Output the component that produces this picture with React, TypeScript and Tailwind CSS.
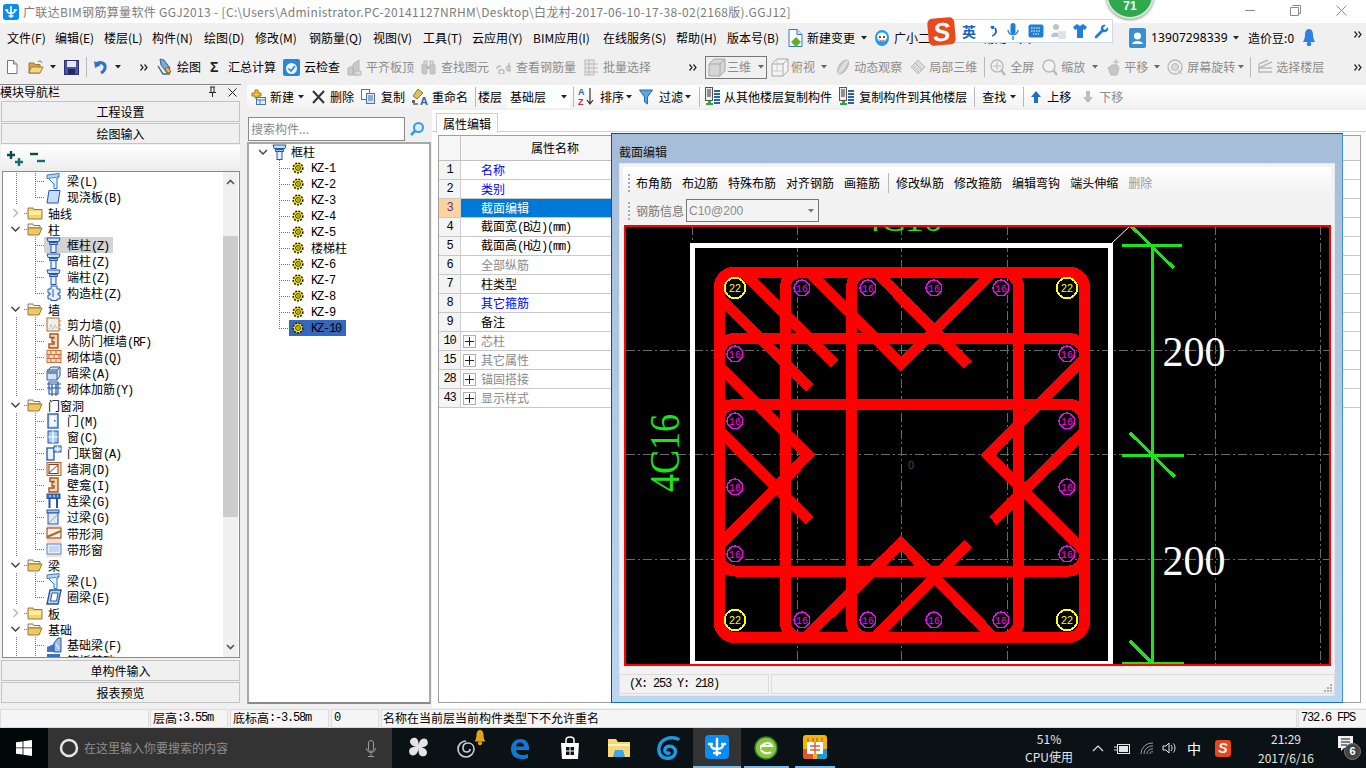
import React from "react";

const CJK = '"Noto Sans CJK SC","Noto Sans",sans-serif';

function Mixed({ t }: { t: string }) {
  const parts = t.split(/([\x00-\x7f]+)/).filter(Boolean);
  return (
    <>
      {parts.map((p, i) =>
        /^[\x00-\x7f]+$/.test(p) ? (
          <span key={i} className="font-['Liberation_Mono',monospace] text-[12px] tracking-[-1.2px]">{p}</span>
        ) : (
          <span key={i}>{p}</span>
        )
      )}
    </>
  );
}

type SP = { className?: string; children: React.ReactNode; w?: number; h?: number; vb?: string };
const Sv = ({ className = "", children, w = 16, h = 16, vb }: SP) => (
  <svg width={w} height={h} viewBox={vb || `0 0 ${w} ${h}`} className={`shrink-0 block ${className}`}>{children}</svg>
);

const Caret = ({ className = "", c = "#222" }: { className?: string; c?: string }) => (
  <Sv w={6} h={4} className={className}><path d="M0 0h6L3 3.5z" fill={c} /></Sv>
);
const More = ({ className = "" }: { className?: string }) => (
  <Sv w={8} h={7} className={className}><path d="M0.5 0.5L3 3.5 0.5 6.5M4.5 0.5L7 3.5 4.5 6.5" fill="none" stroke="#222" strokeWidth="1.2" /></Sv>
);
const Sep = ({ className = "" }: { className?: string }) => <div className={`w-px h-[20px] bg-[#b8b8b8] shrink-0 ${className}`} />;

const AppLogo = ({ s = 16 }: { s?: number }) => (
  <Sv w={s} h={s} vb="0 0 24 24">
    <rect width="24" height="24" rx="4" fill="#0a8df0" />
    <path d="M12 4v16M6 9c0 4 2 5 6 5s6-1 6-5M9 18h6M4 9h3M17 9h3" fill="none" stroke="#fff" strokeWidth="2.4" strokeLinecap="round" />
  </Sv>
);

const Gray = "#b9b9b9";
const IcNew = () => <Sv w={14} h={16}><path d="M2.5 1.5h6l3.5 3.5v9.5h-9.5z" fill="#fff" stroke="#777" /><path d="M8.5 1.5v3.5h3.5" fill="#ddd" stroke="#777" /></Sv>;
const IcOpen = () => <Sv w={16} h={16}><path d="M1 4h5l1 1.5h5V14H1z" fill="#d9a441" stroke="#9a7a35" /><path d="M3 8h12l-3 6H1z" fill="#f4d68a" stroke="#9a7a35" /><path d="M10 3c2-2 3-1 4 1" fill="none" stroke="#3c7a3c" /></Sv>;
const IcSave = () => <Sv w={15} h={16}><rect x="0.5" y="1.5" width="14" height="14" fill="#4a56a8" stroke="#2b3272" /><rect x="3" y="2" width="9" height="6" fill="#e8e8f4" /><rect x="4" y="10" width="7" height="5" fill="#23285c" /></Sv>;
const IcUndo = () => <Sv w={14} h={16}><path d="M2 5c4-3 10-1 9 4-.5 2.5-2 4-4 5" fill="none" stroke="#2f74c8" strokeWidth="3" /><path d="M0 2l1 7 6-3z" fill="#2f74c8" /></Sv>;
const IcDraw = () => <Sv w={16} h={18}><path d="M3 1l4 1 6 8-3 5-6-8z" fill="#7fa6d8" stroke="#3b5f94" /><path d="M1 8l5 8 7 0" fill="none" stroke="#3b5f94" strokeWidth="1.4" /><path d="M8 11l3 4 3-1-3-5z" fill="#e8c040" stroke="#8a6b20" /></Sv>;
const IcCloud = () => <Sv w={17} h={17}><rect width="17" height="17" rx="2" fill="#2a86d6" /><circle cx="8.5" cy="9.5" r="5.5" fill="#eaf4fc" /><path d="M5.5 9.5l2.5 2.5 4-5" fill="none" stroke="#2a86d6" strokeWidth="1.6" /></Sv>;
const IcAlign = () => <Sv w={15} h={17}><path d="M1 16V9l5-2v9zM6 16V5l6-4v15z" fill="#c9c9c9" stroke={Gray} /><path d="M8 12h6v4H8z" fill="#ddd" stroke={Gray} /></Sv>;
const IcBin = () => <Sv w={15} h={17}><rect x="1" y="5" width="5" height="10" rx="1.5" fill="#c8c8c8" stroke={Gray} /><rect x="9" y="5" width="5" height="10" rx="1.5" fill="#c8c8c8" stroke={Gray} /><rect x="3" y="2" width="3" height="4" fill="#ddd" stroke={Gray} /><rect x="9" y="2" width="3" height="4" fill="#ddd" stroke={Gray} /><rect x="6" y="7" width="3" height="3" fill={Gray} /></Sv>;
const IcRebarQ = () => <Sv w={15} h={14}><path d="M1 9c0-3 3-3 4-3M3 12a2.5 2.5 0 100-.1M13 3v8M13 11a2.5 2.5 0 10-.1 0" fill="none" stroke={Gray} strokeWidth="1.5" /></Sv>;
const IcBatch = () => <Sv w={15} h={17}><rect x="1" y="1" width="9" height="15" fill="#e8e8e8" stroke={Gray} /><path d="M1 5h13M1 9h13M1 13h13M5 1v15" stroke={Gray} /></Sv>;
const IcCube = ({ o = false }: { o?: boolean }) => <Sv w={18} h={19}><path d="M1 6l5-5h11v12l-5 5H1z" fill={o ? "#f4f4f4" : "#d6d6d6"} stroke="#a8a8a8" /><path d="M1 6h11v12M12 6l5-5" fill="none" stroke="#a8a8a8" />{o && <path d="M6 1v12H1M6 13l5 0" fill="none" stroke="#ccc" />}</Sv>;
const IcOrbit = () => <Sv w={16} h={18}><ellipse cx="8" cy="9" rx="4" ry="8" transform="rotate(35 8 9)" fill="#c4c4c4" stroke={Gray} /><ellipse cx="8" cy="9" rx="2" ry="8" transform="rotate(35 8 9)" fill="#dedede" /></Sv>;
const IcLocal = () => <Sv w={16} h={16}><path d="M8 1l7 7-7 7-7-7z" fill="#dcdcdc" stroke={Gray} /><path d="M5 4l7 7M3 7l6 6M8 1l-3 3" stroke={Gray} fill="none" /></Sv>;
const IcLens = ({ p = true }: { p?: boolean }) => <Sv w={16} h={17}><circle cx="7" cy="7" r="6" fill="#f2f2f2" stroke={Gray} strokeWidth="1.4" />{p && <path d="M7 3v8M3 7h8" stroke={Gray} />}{!p && <path d="M9 3a5 5 0 012 3" stroke="#fff" fill="none" />}<path d="M11 11l4 5" stroke={Gray} strokeWidth="2.4" /></Sv>;
const IcPan = () => <Sv w={16} h={18}><path d="M3 10l4-3 5 0 2 3-2 7H6z" fill="#c6c6c6" stroke={Gray} /><path d="M11 1v6M8 4h6" stroke={Gray} /></Sv>;
const IcRot = () => <Sv w={16} h={18}><circle cx="8" cy="9" r="7" fill="#efefef" stroke={Gray} strokeWidth="1.3" /><circle cx="8" cy="9" r="3.5" fill="#dadada" stroke={Gray} /><path d="M11 13l4 3" stroke={Gray} /></Sv>;
const IcLayers = () => <Sv w={15} h={16}><path d="M1 5l9-4M1 9l13-6M1 13h13M1 9h13M1 5v9" fill="none" stroke={Gray} strokeWidth="1.4" /></Sv>;

const IcAdd = () => <Sv w={15} h={16}><path d="M4 1h3v3h3v3H7v2H4V7H1V4h3z" fill="#e8c430" stroke="#9a7d16" /><rect x="5.5" y="8.5" width="9" height="7" fill="#e6eefa" stroke="#4a74b0" /><path d="M5.5 11h9M9 11v4.500" stroke="#4a74b0" /></Sv>;
const IcX = () => <Sv w={13} h={14}><path d="M1 1l11 12M12 1L1 13" stroke="#333" strokeWidth="2" /></Sv>;
const IcCopy = () => <Sv w={14} h={15}><rect x="0.500" y="0.500" width="8" height="10" fill="#fff" stroke="#4a74b0" /><rect x="5.500" y="4.500" width="8" height="10" fill="#dce8f8" stroke="#4a74b0" /><path d="M7 7h5M7 9h5M7 11h5" stroke="#4a74b0" /></Sv>;
const IcRename = () => <Sv w={18} h={17}><path d="M7 1l5 4-6 6-4-3z" fill="#d8c060" stroke="#8a7a30" /><path d="M2 16h5" stroke="#888" strokeWidth="2" /><rect x="1" y="12" width="3" height="3" fill="#666" /><text x="9" y="16.500" fontSize="11" fontWeight="700" fill="#2a62b0" fontFamily="Liberation Sans">A</text></Sv>;
const IcAZ = () => <Sv w={17} h={19}><text x="0" y="8" fontSize="9" fontWeight="700" fill="#2a62b0" fontFamily="Liberation Sans">A</text><text x="0" y="18" fontSize="9" fontWeight="700" fill="#c03030" fontFamily="Liberation Sans">Z</text><path d="M12 1v15M9 13l3 4 3-4" fill="none" stroke="#333" strokeWidth="1.2" /></Sv>;
const IcFilter = () => <Sv w={14} h={16}><path d="M0.500 1h13L8.500 8v7l-3-2V8z" fill="#5ba5e0" stroke="#2a6cae" /></Sv>;
const IcCp = () => <Sv w={16} h={19}><rect x="0.500" y="0.500" width="7" height="13" fill="#eee" stroke="#555" /><path d="M2 3h4M2 5h4M2 7h4M2 9h4" stroke="#333" /><path d="M9 4h6M9 7h6M9 10h6M9 13h6M9 16h6" stroke="#2a62b0" strokeWidth="2" /><path d="M3 14h3v2h2v2H1v-2h2z" fill="#2eaa3a" /></Sv>;
const IcUp = ({ c = "#1f6fc8" }: { c?: string }) => <Sv w={10} h={12}><path d="M5 0l5 6H7v6H3V6H0z" fill={c} /></Sv>;
const IcDn = () => <Sv w={10} h={12}><path d="M5 12l5-6H7V0H3v6H0z" fill="#bdbdbd" /></Sv>;
const IcNewDoc = () => <Sv w={15} h={18}><path d="M1 .5h8l5 5V17.500H1z" fill="#fff" stroke="#2a7cc8" /><path d="M9 .5v5h5" fill="#cfe4f8" stroke="#2a7cc8" /><path d="M8 8l5 5-5 5-5-5z" fill="#62ad2a" /></Sv>;
const IcBot = () => <Sv w={16} h={18}><ellipse cx="8" cy="9" rx="7" ry="8" fill="#1e9fe8" /><ellipse cx="8" cy="8" rx="5" ry="4.500" fill="#fff" /><circle cx="6" cy="8" r="1" fill="#123" /><circle cx="10" cy="8" r="1" fill="#123" /><path d="M5.500 11c2 1.500 3 1.500 5 0" stroke="#e33" fill="none" /></Sv>;
const IcUser = () => <Sv w={17} h={20}><rect width="17" height="20" rx="2" fill="#3b8fd0" /><circle cx="8.500" cy="8" r="3.500" fill="#fff" /><path d="M3 16c1-4 10-4 11 0z" fill="#fff" /></Sv>;
const IcBell = ({ c = "#2e7fe6", w = 12, h = 18 }: { c?: string; w?: number; h?: number }) => <Sv w={w} h={h} vb="0 0 12 18"><path d="M6 0c3 0 4 3 4 6s1 5 2 7H0c1-2 2-4 2-7s1-6 4-6z" fill={c} /><circle cx="6" cy="15" r="2.300" fill={c} /></Sv>;

const BL = "#2455a8";
const TI: Record<string, React.ReactNode> = {
  col: <><path d="M1 1h13l-1 3.500H2z" fill="#cfe0f6" stroke={BL} /><path d="M3.500 5.500h8v2h-8z" fill="#a9c6ee" stroke={BL} /><rect x="5" y="7.500" width="5" height="8" fill="#e6f0fc" stroke={BL} /></>,
  beam: <><path d="M1 2l12-1.500v3.500L1 5.500z" fill="#bcd6f4" stroke="#2f78c8" /><path d="M3 6l5 5v4.500h3V5l2-1" fill="#e6f2fc" stroke="#2f78c8" /></>,
  slab: <path d="M3 1.500h11l-2 12.500H1z" fill="#c4dcf6" stroke={BL} />,
  gz: <><path d="M5 1h6v3h3v4h-2v2h2v4h-3v1.500H5V14H2v-4h2V8H2V4h3z" fill="#e6f0fc" stroke={BL} /><path d="M7 4v8" stroke={BL} /></>,
  shear: <><rect x="1" y="1" width="12" height="13" fill="#f4f0e8" stroke="#b06a38" /><path d="M3 12l2-3 2 3 2-4 2 4M4 9l2-2" stroke="#999" strokeDasharray="1 1" fill="none" /><path d="M14 3v2M14 7v2M14 11v2" stroke="#d07a30" /></>,
  rf: <path d="M4 1h8v14H3v-4h5V9H6V5h2V4.500H4z" fill="#f2d6b8" stroke="#a8561c" strokeWidth="1.400" />,
  brick: <><rect x="1" y="1.500" width="14" height="12" fill="#f8dcc4" stroke="#c8703a" /><path d="M1 5.500h14M1 9.500h14M5 1.500v4M10 1.500v4M3 5.500v4M8 5.500v4M13 5.500v4M5 9.500v4M10 9.500v4" stroke="#c8703a" /></>,
  dark: <><path d="M1 6l4-4h9v9l-3 4H1z" fill="#cfe2f6" stroke="#2f5f98" /><path d="M1 5h10v10M11 5l3-3" fill="none" stroke="#2f5f98" /><path d="M1 6h10v3H1z" fill="#6f8fb4" /></>,
  jj: <><path d="M1 3h14M3 1h9v12H3zM1 7h14M6 3v12M10 3v12" fill="none" stroke={BL} strokeWidth="1.200" /><path d="M4 9l7-4" stroke="#2f8fd8" /></>,
  door: <><rect x="2" y="1" width="10" height="14" fill="#cfe2f6" stroke={BL} strokeWidth="1.300" /><rect x="4" y="3" width="6" height="10" fill="#f2f8fe" /><rect x="8" y="7" width="1.500" height="1.500" fill={BL} /></>,
  win: <><rect x="2" y="2" width="10" height="12" fill="#a9cdf2" stroke={BL} /><path d="M7 2v12M2 8h10" stroke="#fff" strokeWidth="1.200" /></>,
  dw: <><rect x="1" y="3" width="7" height="12" fill="#e6f2fc" stroke={BL} strokeWidth="1.300" /><rect x="8" y="1" width="7" height="6" fill="#a9cdf2" stroke={BL} /><path d="M11.500 1v6M8 4h7" stroke="#fff" /></>,
  hole: <><rect x="1" y="1.500" width="14" height="13" fill="#f8dcc4" stroke="#b06030" /><rect x="3" y="3.500" width="9" height="9" fill="#fff" stroke="#804020" /><path d="M3 12l9-8" stroke="#804020" /></>,
  band: <><rect x="1" y="0" width="14" height="16" fill="#f8dcd0" /><rect x="1" y="3" width="14" height="10" fill="#fbeee4" stroke="#7a3e10" /><path d="M1 12l14-6" stroke="#a86a30" strokeWidth="2" /></>,
  bandw: <><rect x="1" y="0" width="14" height="16" fill="#f8dcd0" /><rect x="1" y="3" width="14" height="10" fill="#e6f0fc" stroke="#5a84c0" /><rect x="3" y="5" width="10" height="6" fill="#c4d8f4" /></>,
  lian: <><rect x="1" y="1" width="13" height="4.500" fill="#3d6fc0" stroke={BL} /><path d="M3 3h2M7 3h2M11 3h1" stroke="#fff" /><path d="M3.500 6v9M11 6v9" stroke={BL} strokeWidth="2" /></>,
  guo: <><rect x="1" y="1" width="12" height="3" fill="#a8c8f0" stroke={BL} /><rect x="2" y="4" width="10" height="11" fill="#dbe9f8" stroke={BL} /><path d="M3 14l8-8" stroke="#7fa8dc" /></>,
  ring: <><path d="M4 1h11l-3 14H1z" fill="#bcd6f4" stroke={BL} strokeWidth="1.400" /><path d="M6 4h6l-1.500 8H4.500z" fill="#fff" stroke={BL} /></>,
  fb: <><path d="M1 15V10l7-3V15z" fill="#3d78c8" /><path d="M8 6l4-5h3v14H8z" fill="#9cc0ea" stroke={BL} /><path d="M10 7l3 5" stroke="#fff" /></>,
  raft: <><rect x="1" y="1" width="13" height="4" fill="#3d6fc0" /><path d="M1 9h13" stroke={BL} strokeWidth="2" /></>,
};
const TIcon = ({ k }: { k: string }) => <Sv w={16} h={16}>{TI[k]}</Sv>;
const FolderC = () => <Sv w={16} h={14}><path d="M1 2h5l1 1.500h8V13H1z" fill="#f6d468" stroke="#8f7a50" /><path d="M2 5h12v4H2z" fill="#fdeea0" /></Sv>;
const FolderO = () => <Sv w={16} h={14}><path d="M1 2h5l1 1.500h6V6H1z" fill="#f8f0d8" stroke="#8f7a50" /><path d="M1 13V6h14l-3 7z" fill="#f2c85a" stroke="#8f7a50" /></Sv>;
const Gear = () => (
  <Sv w={12} h={12}>
    <circle cx="6" cy="6" r="4.800" fill="#fff200" stroke="#222" strokeWidth="1.600" strokeDasharray="2 1.200" />
    <circle cx="6" cy="6" r="2.400" fill="#fff200" stroke="#222" />
    <circle cx="6" cy="6" r="0.700" fill="#222" />
  </Sv>
);

const Conn = ({ w, l15, l34, last, x = 34, ex = 43 }: { w: number; l15?: boolean; l34?: boolean; last?: boolean; x?: number; ex?: number }) => (
  <svg width={w} height={16} className="shrink-0 block" shapeRendering="crispEdges">
    {l15 && <line x1="15.5" y1="0" x2="15.5" y2="16" stroke="#777" strokeDasharray="1 1" />}
    {l34 && <line x1={x + 0.5} y1="0" x2={x + 0.5} y2={last ? 8 : 16} stroke="#777" strokeDasharray="1 1" />}
    {l34 && <line x1={x} y1="8.500" x2={ex} y2="8.500" stroke="#777" strokeDasharray="1 1" />}
  </svg>
);

const Chev = ({ open }: { open: boolean }) => (
  <svg width={26} height={16} className="shrink-0 block">
    {open ? <path d="M10.500 6l4 4 4-4" fill="none" stroke="#444" strokeWidth="1.500" /> : <path d="M12.500 4l4 4-4 4" fill="none" stroke="#bbb" strokeWidth="1.500" />}
    <path d="M23 8.500h3" stroke="#777" strokeDasharray="1 1" />
  </svg>
);

type R = { t: string; k?: string; o?: boolean; l15?: boolean; last?: boolean; sel?: boolean };
const rows: R[] = [
  { t: "梁(L)", k: "beam", l15: true },
  { t: "现浇板(B)", k: "slab", l15: true, last: true },
  { t: "轴线", o: false },
  { t: "柱", o: true },
  { t: "框柱(Z)", k: "col", sel: true },
  { t: "暗柱(Z)", k: "col" },
  { t: "端柱(Z)", k: "col" },
  { t: "构造柱(Z)", k: "gz", last: true },
  { t: "墙", o: true },
  { t: "剪力墙(Q)", k: "shear", l15: true },
  { t: "人防门框墙(RF)", k: "rf", l15: true },
  { t: "砌体墙(Q)", k: "brick", l15: true },
  { t: "暗梁(A)", k: "dark", l15: true },
  { t: "砌体加筋(Y)", k: "jj", l15: true, last: true },
  { t: "门窗洞", o: true },
  { t: "门(M)", k: "door", l15: true },
  { t: "窗(C)", k: "win", l15: true },
  { t: "门联窗(A)", k: "dw", l15: true },
  { t: "墙洞(D)", k: "hole", l15: true },
  { t: "壁龛(I)", k: "rf", l15: true },
  { t: "连梁(G)", k: "lian", l15: true },
  { t: "过梁(G)", k: "guo", l15: true },
  { t: "带形洞", k: "band", l15: true },
  { t: "带形窗", k: "bandw", l15: true, last: true },
  { t: "梁", o: true },
  { t: "梁(L)", k: "beam", l15: true },
  { t: "圈梁(E)", k: "ring", l15: true, last: true },
  { t: "板", o: false },
  { t: "基础", o: true },
  { t: "基础梁(F)", k: "fb", l15: true },
  { t: "筏板基础(M)", k: "raft", l15: true },
];

const NavBtn = ({ t, className = "" }: { t: string; className?: string }) => (
  <div className={`h-[21px] mx-px flex items-center justify-center bg-[#f0f0f0] border border-[#c4c4c4] text-[12px] text-black ${className}`}>{t}</div>
);

const LeftPanel = () => (
  <div className="w-[245px] shrink-0 flex flex-col pt-[2px]">
    <div className="h-[15px] w-[241px] flex items-center border-t border-[#888] text-[12px] text-black">
      <span>模块导航栏</span>
      <Sv w={9} h={12} className="ml-auto"><path d="M2 1h5M3 1v5M6 1v5M1 6.500h7M4.500 7v4" stroke="#222" fill="none" /></Sv>
      <Sv w={9} h={9} className="ml-[11px] mr-[4px]"><path d="M0.500 0.500l8 8M8.500 0.500l-8 8" stroke="#222" /></Sv>
    </div>
    <NavBtn t="工程设置" className="w-[239px] mt-[2px]" />
    <NavBtn t="绘图输入" className="w-[239px] mt-px" />
    <div className="w-[239px] mx-px h-[26px] mt-px flex items-center pl-[6px] bg-gradient-to-b from-white to-[#ececec]">
      <Sv w={17} h={15}><path d="M4 0v8M0 4h8" stroke="#0a4a4a" strokeWidth="2.400" /><path d="M12 7v8M8 11h8" stroke="#0a7070" strokeWidth="2.400" /></Sv>
      <Sv w={16} h={12} className="ml-[6px]"><path d="M0 2h8" stroke="#0a4a4a" strokeWidth="2.400" /><path d="M7 9h8" stroke="#0a7070" strokeWidth="2.400" /></Sv>
    </div>
    <div className="w-[238px] ml-[2px] h-[487px] border border-[#8a8a8a] bg-white flex overflow-hidden">
      <div className="flex-1 h-full overflow-hidden pt-px text-[12px] text-black -ml-[2px]">
        {rows.map((r, i) =>
          r.k ? (
            <div key={i} className="flex h-4 items-center whitespace-nowrap">
              <Conn w={43} l15={r.l15} l34 last={r.last} />
              <span className={`flex items-center h-4 pl-[2px] pr-[4px] ${r.sel ? "bg-[#d3d3d3]" : ""}`}>
                <TIcon k={r.k} />
                <span className="ml-[5px] translate-y-px"><Mixed t={r.t} /></span>
              </span>
            </div>
          ) : (
            <div key={i} className="flex h-4 items-center whitespace-nowrap">
              <Chev open={!!r.o} />
              {r.o ? <FolderO /> : <FolderC />}
              <span className="ml-[5px] translate-y-px">{r.t}</span>
            </div>
          )
        )}
      </div>
      <div className="w-[15px] h-full flex flex-col bg-[#f0f0f0] mr-px shrink-0">
        <div className="h-[20px] flex items-center justify-center shrink-0"><Sv w={9} h={6}><path d="M1 5l3.500-3.500L8 5" fill="none" stroke="#555" strokeWidth="1.600" /></Sv></div>
        <div className="h-[44px] shrink-0" />
        <div className="h-[281px] bg-[#cdcdcd] shrink-0" />
        <div className="flex-1" />
        <div className="h-[20px] flex items-center justify-center shrink-0"><Sv w={9} h={6}><path d="M1 1l3.500 3.500L8 1" fill="none" stroke="#555" strokeWidth="1.600" /></Sv></div>
      </div>
    </div>
    <NavBtn t="单构件输入" className="w-[239px] mt-[2px]" />
    <NavBtn t="报表预览" className="w-[239px] mt-px" />
  </div>
);

const gearRows = ["KZ-1", "KZ-2", "KZ-3", "KZ-4", "KZ-5", "楼梯柱", "KZ-6", "KZ-7", "KZ-8", "KZ-9", "KZ-10"];

const ListPanel = () => (
  <div className="w-[187px] shrink-0 pt-[7px] flex flex-col">
    <div className="flex items-center h-[24px] pl-[3px]">
      <div className="w-[157px] h-[24px] border border-[#8a8a8a] bg-white flex items-center pl-[2px] text-[12px] text-[#8a8a8a]">搜索构件...</div>
      <Sv w={14} h={14} className="ml-[5px]"><circle cx="8.500" cy="5.500" r="4.500" fill="#d8ecfa" stroke="#3b9ae0" strokeWidth="2" /><path d="M5 9l-4 4" stroke="#3b9ae0" strokeWidth="2.500" /></Sv>
    </div>
    <div className="ml-[2px] w-[184px] h-[562px] mt-px border-2 border-[#a8a8a8] border-b-[#8a8a8a] bg-white text-[12px] text-black">
      <div className="flex h-4 items-center">
        <svg width={10} height={16} className="shrink-0" />
        <svg width={11} height={16} className="shrink-0"><path d="M0 6l4 4 4-4" fill="none" stroke="#444" strokeWidth="1.500" /></svg>
        <span className="ml-[2px]"><TIcon k="col" /></span>
        <span className="ml-[3px]">框柱</span>
      </div>
      {gearRows.map((g, i) => (
        <div key={g} className="flex h-4 items-center">
          <Conn w={43} l34 last={i === gearRows.length - 1} x={30} ex={41} />
          <span className={`flex items-center h-4 -ml-[3px] pl-[3px] pr-[2px] ${g === "KZ-10" ? "bg-[#3468bf] w-[57px]" : ""}`}>
            <Gear />
            <span className="ml-[7px] whitespace-nowrap"><Mixed t={g} /></span>
          </span>
        </div>
      ))}
    </div>
  </div>
);

const props = [
  { n: "1", t: "名称", c: "text-[#0000ff]" },
  { n: "2", t: "类别", c: "text-[#0000ff]" },
  { n: "3", t: "截面编辑", c: "text-white", sel: true },
  { n: "4", t: "截面宽(B边)(mm)", c: "text-black" },
  { n: "5", t: "截面高(H边)(mm)", c: "text-black" },
  { n: "6", t: "全部纵筋", c: "text-[#8a8a8a]" },
  { n: "7", t: "柱类型", c: "text-black" },
  { n: "8", t: "其它箍筋", c: "text-[#0000ff]" },
  { n: "9", t: "备注", c: "text-black" },
  { n: "10", t: "芯柱", c: "text-[#8a8a8a]", plus: true },
  { n: "15", t: "其它属性", c: "text-[#8a8a8a]", plus: true },
  { n: "28", t: "锚固搭接", c: "text-[#8a8a8a]", plus: true },
  { n: "43", t: "显示样式", c: "text-[#8a8a8a]", plus: true },
];

const PropPanel = () => (
  <div className="flex-1 flex flex-col pt-[3px] bg-white">
    <div className="h-[19px] flex border-b border-[#d0d0d0]">
      <div className="ml-[4px] w-[62px] h-[20px] border border-b-0 border-[#d0d0d0] bg-white flex items-center justify-center text-[12px] text-black">属性编辑</div>
    </div>
    <div className="ml-[6px] w-[923px] h-[568px] mt-[3px] border border-[#a0a0a0] bg-white text-[12px]">
      <div className="flex h-[25px] border-b border-[#c0c0c0] bg-[#f6f6f6]">
        <div className="w-[22px] border-r border-[#c8c8c8]" />
        <div className="w-[188px] flex items-center justify-center text-black">属性名称</div>
      </div>
      {props.map((p) => (
        <div key={p.n} className="flex h-[19px] border-b border-[#c8c8c8]">
          <div className={`w-[22px] flex items-center justify-center border-r border-[#d0d0d0] font-['Liberation_Mono',monospace] text-[12px] tracking-[-1.2px] ${p.sel ? "bg-[#fdd49a] text-[#6a2a9a]" : "bg-[#f4f4f4] text-black"}`}>{p.n}</div>
          <div className={`w-[188px] flex items-center pl-[2px] ${p.sel ? "bg-[#0078d7]" : ""} ${p.c}`}>
            {p.plus ? (
              <span className="w-[13px] h-[13px] border border-[#b0b0b0] flex items-center justify-center shrink-0">
                <Sv w={9} h={9}><path d="M4.500 0v9M0 4.500h9" stroke="#222" /></Sv>
              </span>
            ) : (
              <span className="w-[13px] shrink-0" />
            )}
            <span className="ml-[5px] whitespace-nowrap"><Mixed t={p.t} /></span>
          </div>
        </div>
      ))}
    </div>
  </div>
);

const dim16 = [
  [802, 289], [868, 289], [934, 289], [1001, 289],
  [735, 355], [1067, 355], [735, 422], [1067, 422], [735, 488], [1067, 488], [735, 555], [1067, 555],
  [802, 621], [868, 621], [934, 621], [1001, 621],
];
const dim22 = [[735, 289], [1067, 289], [735, 621], [1067, 621]];

const Section = () => (
  <svg width={707} height={441} viewBox="624 226 707 441" className="block" shapeRendering="crispEdges">
    <rect x="624" y="226" width="707" height="441" fill="#000" />
    <g stroke="#6a6a6a" strokeDasharray="9 3 2 3" strokeWidth="1">
      {[692, 797, 901, 1007, 1215, 1320].map((x) => <line key={x} x1={x + 0.5} y1="227" x2={x + 0.5} y2="666" />)}
      {[351, 455, 560].map((y) => <line key={y} x1="626" y1={y + 0.5} x2="1330" y2={y + 0.5} />)}
    </g>
    <rect x="692.500" y="246.500" width="418" height="417.500" fill="none" stroke="#fff" strokeWidth="5" />
    <g fill="none" stroke="#ff0000" strokeWidth="11">
      <rect x="719" y="273" width="365.500" height="365.500" rx="16" />
      <rect x="785.300" y="273" width="233.400" height="365.500" rx="16" />
      <rect x="851.300" y="273" width="167.400" height="365.500" rx="16" />
      <rect x="719" y="339.500" width="365.500" height="232.500" rx="16" />
      <rect x="719" y="405.300" width="365.500" height="166.700" rx="16" />
      <path d="M743 273L835 365M719 298L810 389M719 367L808 456L719 547M719 431L810 522" />
      <path d="M812 276L901 365L993 273M878 275L968 366" />
      <path d="M1084 360L988 456L1084 552M1084 433L993 522" />
      <path d="M806 638L901 544L993 638M875 638L968 545" />
    </g>
    {dim16.map(([x, y]) => (
      <g key={`${x}-${y}`}>
        {x !== 934 && <circle cx={x} cy={y} r="10" fill="#000" />}
        <circle cx={x} cy={y} r="7.800" fill="#000" stroke="#ff00ff" strokeWidth="1.600" />
        <text x={x} y={y + 4} textAnchor="middle" fontSize="11" fill="#ff00ff" fontFamily="Liberation Mono,monospace" textLength="12" lengthAdjust="spacingAndGlyphs">16</text>
      </g>
    ))}
    {dim22.map(([x, y]) => (
      <g key={`${x}-${y}`}>
        <circle cx={x} cy={y} r="10.300" fill="#000" stroke="#ffff00" strokeWidth="1.700" />
        <text x={x} y={y + 4} textAnchor="middle" fontSize="11" fill="#ffff00" fontFamily="Liberation Sans,sans-serif" textLength="12" lengthAdjust="spacingAndGlyphs">22</text>
      </g>
    ))}
    <text x="911" y="470" fontSize="11" fill="#4a4a4a" fontFamily="Liberation Sans,sans-serif" textAnchor="middle">0</text>
    <path d="M1112 244L1130 227" stroke="#fff" strokeWidth="1" fill="none" shapeRendering="auto" />
    <g stroke="#19e619" strokeWidth="3" fill="none">
      <path d="M1152 245V665" />
      <path d="M1122 246.500H1182M1122 456H1184M1122 664H1184" />
      <path d="M1131 227L1174 269M1130 434L1175 478M1130 642L1152 664" />
    </g>
    <text x="902" y="232" textAnchor="middle" fontSize="38" fill="#19e619" fontFamily="Liberation Serif,serif" textLength="80" shapeRendering="auto">4C16</text>
    <text transform="translate(679 493) rotate(-90)" fontSize="43" fill="#19e619" fontFamily="Liberation Serif,serif" textLength="78" lengthAdjust="spacingAndGlyphs">4C16</text>
    <text x="1194" y="367" textAnchor="middle" fontSize="42" fill="#fff" fontFamily="Liberation Serif,serif">200</text>
    <text x="1194" y="576" textAnchor="middle" fontSize="42" fill="#fff" fontFamily="Liberation Serif,serif">200</text>
    <rect x="625" y="227" width="705" height="439" fill="none" stroke="#ff0000" strokeWidth="2" />
  </svg>
);

const dlgTools = ["布角筋", "布边筋", "特殊布筋", "对齐钢筋", "画箍筋"];
const dlgTools2 = ["修改纵筋", "修改箍筋", "编辑弯钩", "端头伸缩"];

const Dialog = () => (
  <div className="absolute left-[611px] top-[133px] w-[732px] h-[570px] border border-[#444] border-b-[#0c74b8] border-r-[#3f95cf] bg-gradient-to-b from-[#a5bdd8] to-[#bcd6f0] flex flex-col">
    <div className="h-[29px] flex items-end pb-[5px] pl-[7px] text-[12px] text-[#111] shrink-0">截面编辑</div>
    <div className="mx-[7px] h-[533px] bg-[#f2f2f2] border border-[#e8e8e8] flex flex-col">
      <div className="mx-[3px] mt-[3px] h-[29px] pt-[2px] bg-gradient-to-b from-white to-[#f1f1f1] flex items-center text-[12px] text-black shrink-0">
        <div className="w-[2px] h-[18px] ml-[5px] border-l-2 border-dotted border-[#aaa]" />
        <div className="flex items-center gap-[10px] ml-[6px]">
          {dlgTools.map((t) => <span key={t}>{t}</span>)}
        </div>
        <Sep className="ml-[8px] mr-[7px]" />
        <div className="flex items-center gap-[10px]">
          {dlgTools2.map((t) => <span key={t}>{t}</span>)}
          <span className="text-[#9a9a9a]">删除</span>
        </div>
      </div>
      <div className="mx-[3px] h-[29px] flex items-center text-[12px] text-[#777] shrink-0">
        <div className="w-[2px] h-[18px] ml-[5px] border-l-2 border-dotted border-[#aaa]" />
        <span className="ml-[6px]">钢筋信息</span>
        <div className="ml-[2px] w-[133px] h-[23px] border border-[#777] bg-[#f4f4f4] flex items-center pl-[2px] font-['Liberation_Sans',sans-serif] text-[#8a8a8a]">
          C10@200
          <Caret className="ml-auto mr-[4px]" c="#777" />
        </div>
      </div>
      <div className="ml-[4px]"><Section /></div>
      <div className="h-[8px] shrink-0" />
      <div className="flex h-[20px] mx-[-1px] text-[12px] shrink-0 bg-[#f2f2f2]">
        <div className="w-[150px] h-[20px] border border-[#dcdcdc] flex items-center pl-[9px]"><Mixed t="(X: 253 Y: 218)" /></div>
        <div className="ml-[2px] flex-1 h-[20px] border border-[#dcdcdc] flex items-end justify-end pr-px pb-px">
          <Sv w={10} h={10}><path d="M7 2h2v2H7zM4 5h2v2H4zM7 5h2v2H7zM1 8h2v2H1zM4 8h2v2H4zM7 8h2v2H7z" fill="#b0b0b0" /></Sv>
        </div>
      </div>
    </div>
  </div>
);

const menuItems: [string, string][] = [
  ["文件(F)", "w-[48px]"], ["编辑(E)", "w-[49px]"], ["楼层(L)", "w-[48px]"], ["构件(N)", "w-[52px]"],
  ["绘图(D)", "w-[51px]"], ["修改(M)", "w-[54px]"], ["钢筋量(Q)", "w-[64px]"], ["视图(V)", "w-[50px]"],
  ["工具(T)", "w-[49px]"], ["云应用(Y)", "w-[61px]"], ["BIM应用(I)", "w-[70px]"], ["在线服务(S)", "w-[73px]"],
  ["帮助(H)", "w-[51px]"], ["版本号(B)", "w-[61px]"],
];

const Tx = ({ t, g, className = "" }: { t: string; g?: boolean; className?: string }) => (
  <span className={`shrink-0 whitespace-nowrap ${g ? "text-[#8c8c8c]" : "text-black"} ${className}`}>{t}</span>
);

const Toolbar1 = () => (
  <div className="h-[30px] flex items-center text-[12px]">
    <div className="ml-[5px]"><IcNew /></div>
    <div className="ml-[9px]"><IcOpen /></div>
    <Caret className="ml-[6px]" />
    <div className="ml-[8px]"><IcSave /></div>
    <Sep className="ml-[7px]" />
    <div className="ml-[7px]"><IcUndo /></div>
    <Caret className="ml-[7px]" />
    <More className="ml-[19px]" />
    <div className="ml-[9px]"><IcDraw /></div>
    <Tx t="绘图" className="ml-[4px]" />
    <span className="ml-[9px] w-[11px] shrink-0 font-['Liberation_Sans',sans-serif] font-bold text-[14px] leading-none text-[#222]">Σ</span>
    <Tx t="汇总计算" className="ml-[7px]" />
    <div className="ml-[7px]"><IcCloud /></div>
    <Tx t="云检查" className="ml-[4px]" />
    <div className="ml-[7px]"><IcAlign /></div>
    <Tx t="平齐板顶" g className="ml-[4px]" />
    <div className="ml-[7px]"><IcBin /></div>
    <Tx t="查找图元" g className="ml-[5px]" />
    <div className="ml-[7px]"><IcRebarQ /></div>
    <Tx t="查看钢筋量" g className="ml-[5px]" />
    <div className="ml-[8px]"><IcBatch /></div>
    <Tx t="批量选择" g className="ml-[4px]" />
    <More className="ml-[38px]" />
    <div className="ml-[8px] w-[62px] h-[23px] border border-[#777] flex items-center pl-[2px] shrink-0">
      <IcCube />
      <Tx t="三维" g className="ml-[1px]" />
      <Caret className="ml-[7px]" c="#666" />
    </div>
    <div className="ml-[4px]"><IcCube o /></div>
    <Tx t="俯视" g className="ml-[2px]" />
    <Caret className="ml-[6px]" c="#666" />
    <div className="ml-[8px]"><IcOrbit /></div>
    <Tx t="动态观察" g className="ml-[3px]" />
    <div className="ml-[8px]"><IcLocal /></div>
    <Tx t="局部三维" g className="ml-[3px]" />
    <Sep className="ml-[7px]" />
    <div className="ml-[5px]"><IcLens /></div>
    <Tx t="全屏" g className="ml-[4px]" />
    <div className="ml-[8px]"><IcLens p={false} /></div>
    <Tx t="缩放" g className="ml-[3px]" />
    <Caret className="ml-[7px]" c="#666" />
    <div className="ml-[7px]"><IcPan /></div>
    <Tx t="平移" g className="ml-[3px]" />
    <Caret className="ml-[6px]" c="#666" />
    <div className="ml-[7px]"><IcRot /></div>
    <Tx t="屏幕旋转" g className="ml-[4px]" />
    <Caret className="ml-[3px]" c="#666" />
    <Sep className="ml-[6px]" />
    <div className="ml-[7px]"><IcLayers /></div>
    <Tx t="选择楼层" g className="ml-[3px]" />
    <More className="ml-[30px]" />
  </div>
);

const Toolbar2 = () => (
  <div className="h-[28px] pt-[3px] shrink-0">
    <div className="h-[23px] ml-[2px] rounded-l-[3px] bg-gradient-to-b from-white to-[#f3f3f3] flex items-center text-[12px]">
      <div className="ml-[4px]"><IcAdd /></div>
      <Tx t="新建" className="ml-[4px]" />
      <Caret className="ml-[4px]" />
      <div className="ml-[8px]"><IcX /></div>
      <Tx t="删除" className="ml-[5px]" />
      <div className="ml-[7px]"><IcCopy /></div>
      <Tx t="复制" className="ml-[6px]" />
      <div className="ml-[6px]"><IcRename /></div>
      <Tx t="重命名" className="ml-[3px]" />
      <Sep className="ml-[7px]" />
      <Tx t="楼层" className="ml-[2px]" />
      <div className="ml-[5px] w-[63px] h-[23px] bg-white flex items-center pl-[3px] shrink-0">
        <Tx t="基础层" />
        <Caret className="ml-[15px]" />
      </div>
      <Sep className="ml-[3px]" />
      <div className="ml-[4px]"><IcAZ /></div>
      <Tx t="排序" className="ml-[5px]" />
      <Caret className="ml-[2px]" />
      <div className="ml-[7px]"><IcFilter /></div>
      <Tx t="过滤" className="ml-[6px]" />
      <Caret className="ml-[2px]" />
      <Sep className="ml-[8px]" />
      <div className="ml-[5px]"><IcCp /></div>
      <Tx t="从其他楼层复制构件" className="ml-[3px]" />
      <div className="ml-[7px]"><IcCp /></div>
      <Tx t="复制构件到其他楼层" className="ml-[4px]" />
      <Sep className="ml-[7px]" />
      <Tx t="查找" className="ml-[7px]" />
      <Caret className="ml-[4px]" />
      <Sep className="ml-[7px]" />
      <div className="ml-[7px]"><IcUp /></div>
      <Tx t="上移" className="ml-[6px]" />
      <div className="ml-[12px]"><IcDn /></div>
      <Tx t="下移" g className="ml-[6px]" />
    </div>
  </div>
);

const cells = "h-[19px] border border-[#dcdcdc] bg-[#f5f5f5] flex items-center shrink-0 text-[12px] text-black";

const TaskCell = ({ className = "", children }: { className?: string; children: React.ReactNode }) => (
  <div className={`h-[40px] flex items-center justify-center shrink-0 ${className}`}>{children}</div>
);

const Taskbar = () => (
  <div className="h-[40px] bg-[#0a1216] flex items-center text-white">
    <TaskCell className="w-[48px] bg-[#02080a]">
      <Sv w={16} h={16}><path d="M0 2.300L6.600 1.400v6.100H0zM7.400 1.300L16 0v7.500H7.400zM0 8.300h6.600v6.200L0 13.700zM7.400 8.300H16V16l-8.600-1.200z" fill="#fff" /></Sv>
    </TaskCell>
    <div className="w-[344px] h-[40px] bg-[#333333] flex items-center shrink-0 pl-[11px] text-[13px] text-[#8f8f8f]">
      <Sv w={20} h={20}><circle cx="10" cy="10" r="8" fill="none" stroke="#e6e6e6" strokeWidth="2.500" /></Sv>
      <span className="ml-[5px] w-[168px] whitespace-nowrap text-[12px] tracking-[0.0px]">在这里输入你要搜索的内容</span>
      <Sv w={10} h={17} className="ml-[114px]"><rect x="2.500" y="0.500" width="5" height="11" rx="2.500" fill="none" stroke="#9a9a9a" /><path d="M0.500 8c0 6 9 6 9 0M5 13.500v3M2 16.500h6" fill="none" stroke="#9a9a9a" /></Sv>
    </div>
    <TaskCell className="w-[52px]">
      <Sv w={21} h={22}><path d="M10.500 10C6 10 2 8 2 4.500S6 0 8 1s3 4 2.500 9zM10.500 10c0-4.500 2-8.500 5.500-8.500s4.500 4 3.500 6-4 3-9 2.500zM10.500 10c4.500 0 8.500 2 8.500 5.500s-4 4.500-6 3.500-3-4-2.500-9zM10.500 10c0 4.500-2 8.500-5.500 8.500S.5 14.500 1.500 12.500s4-3 9-2.500z" fill="#e4e4e4" /></Sv>
    </TaskCell>
    <TaskCell className="w-[51px]">
      <div className="relative w-[30px] h-[24px]">
        <Sv w={22} h={22} className="mt-[2px]"><path d="M11 3a8 8 0 108 8c0-4-3-6-6-6s-5 2-5 5 2 4 4 4 3-1 3-3" fill="none" stroke="#cfcfcf" strokeWidth="1.600" /></Sv>
        <span className="absolute right-[-1px] top-[-6px]"><IcBell c="#e3a21a" w={12} h={16} /></span>
      </div>
    </TaskCell>
    <TaskCell className="w-[50px]">
      <Sv w={20} h={21}><path d="M1 11C1 4 6 1 11 1c5 0 8 4 8 9v2H6c0 3 3 5 7 5 2 0 4-.5 5-1v4c-2 1-4 1-6 1-6 0-11-3-11-10zM6 8.500h8C14 6 12.500 4.500 10 4.500S6.500 6 6 8.500z" fill="#0f78d4" /></Sv>
    </TaskCell>
    <TaskCell className="w-[49px]">
      <Sv w={22} h={24}><path d="M2 7h18l-1 16H3z" fill="#fff" /><path d="M7 8V4c0-4 8-4 8 0v4" fill="none" stroke="#fff" strokeWidth="1.500" /><path d="M7 11h3.500v3.500H7zM11.500 11H15v3.500h-3.500zM7 15.500h3.500V19H7zM11.500 15.500H15V19h-3.500z" fill="#0a1216" /></Sv>
    </TaskCell>
    <TaskCell className="w-[49px]">
      <Sv w={22} h={20}><path d="M0 1h8l2 3h12v15H0z" fill="#f8d775" /><path d="M0 6h22v2H0z" fill="#fff2c0" /><path d="M7 12h8l2 7H5z" fill="#3ba7e6" /></Sv>
    </TaskCell>
    <TaskCell className="w-[50px]">
      <Sv w={24} h={24}><path d="M22 3C14 0 4 3 3 12s6 11 11 10 7-7 4-10-8-2-9 1 2 5 4 4" fill="none" stroke="#1a9be6" strokeWidth="3.400" strokeLinecap="round" /></Sv>
    </TaskCell>
    <TaskCell className="w-[48px] bg-[#333] border-b-2 border-[#76b9ed]">
      <AppLogo s={24} />
    </TaskCell>
    <TaskCell className="w-[50px]">
      <div className="w-[45px] h-[40px] flex items-center justify-center border-b-2 border-[#76b9ed]">
        <Sv w={24} h={25}><circle cx="12" cy="13" r="11" fill="#8cc63f" stroke="#2d7d2d" strokeWidth="1.400" /><path d="M7 12c3-5 9-5 11-1H7zM7 15c3 4 8 4 10 2" fill="none" stroke="#fff" strokeWidth="2" /></Sv>
      </div>
    </TaskCell>
    <TaskCell className="w-[48px]">
      <div className="w-[40px] h-[40px] flex items-center justify-center border-b-2 border-[#76b9ed]">
        <Sv w={24} h={24}><rect width="24" height="24" rx="3" fill="#f4b400" /><path d="M0 14h10v10H3a3 3 0 01-3-3z" fill="#e2532f" /><path d="M14 14h10v7a3 3 0 01-3 3h-7z" fill="#1b9ad6" /><rect x="4" y="7" width="16" height="12" fill="#fff" /><path d="M7 11h10M7 15h10M12 7v12M5 3v4M10 3v4M14 3v4M19 3v4" stroke="#d0603a" strokeWidth="1.400" /></Sv>
      </div>
    </TaskCell>
    <div className="ml-[185px] w-[50px] flex flex-col items-center text-[12px] leading-[18px] shrink-0 whitespace-nowrap text-[#e6e6e6]">
      <span>51%</span>
      <span>CPU使用</span>
    </div>
    <Sv w={12} h={7} className="ml-[18px]"><path d="M1 6l5-5 5 5" fill="none" stroke="#e6e6e6" strokeWidth="1.200" /></Sv>
    <Sv w={16} h={11} className="ml-[10px]"><rect x="3.500" y="1.500" width="12" height="9" fill="none" stroke="#e6e6e6" /><rect x="5" y="3" width="9" height="6" fill="#e6e6e6" /><path d="M0 4h3M0 7h3" stroke="#e6e6e6" /></Sv>
    <Sv w={14} h={13} className="ml-[10px]"><path d="M1 12a11 11 0 0112-11M4 12a8 8 0 019-8M7 12a5 5 0 016-5M10 12a2 2 0 013-2" fill="none" stroke="#9a9a9a" /></Sv>
    <Sv w={15} h={14} className="ml-[8px]"><path d="M1 5h3l3-3v10L4 9H1z" fill="none" stroke="#e6e6e6" /><path d="M9 4c1.500 2 1.500 4 0 6M11.500 2.500c2 3 2 6 0 9" fill="none" stroke="#e6e6e6" /></Sv>
    <span className="ml-[10px] text-[14px] shrink-0">中</span>
    <div className="ml-[14px] w-[16px] h-[17px] bg-[#e8461c] rounded-[3px] flex items-center justify-center font-['Liberation_Sans',sans-serif] font-bold italic text-[14px] leading-none shrink-0">S</div>
    <div className="ml-[17px] w-[76px] flex flex-col items-center text-[12px] leading-[19px] shrink-0 text-[#e6e6e6]">
      <span>21:29</span>
      <span>2017/6/16</span>
    </div>
    <div className="ml-[14px] relative w-[18px] h-[18px] shrink-0 -translate-y-[3px]">
      <Sv w={15} h={16}><path d="M0 0h15v12H6l-3 3v-3H0z" fill="#f0f0f0" /><path d="M3 3h9M3 6h9M3 9h6" stroke="#0a1216" /></Sv>
      <span className="absolute left-[6px] top-[7px] w-[17px] h-[17px] rounded-full bg-[#444] border border-[#777] flex items-center justify-center text-[11px] font-bold font-['Liberation_Sans',sans-serif]">6</span>
    </div>
  </div>
);

export default function App() {
  return (
    <div className="relative w-[1366px] h-[768px] overflow-hidden bg-[#f0f0f0] font-['Noto_Sans_CJK_SC','Noto_Sans',sans-serif] leading-none" style={{ fontFamily: CJK }}>
      <div className="h-[23px] bg-white flex items-center text-[12px] text-[#7c7c7c]">
        <div className="ml-[3px]"><AppLogo s={16} /></div>
        <span className="ml-[4px] whitespace-nowrap tracking-[0.33px]">广联达BIM钢筋算量软件 GGJ2013 - [C:\Users\Administrator.PC-20141127NRHM\Desktop\白龙村-2017-06-10-17-38-02(2168版).GGJ12]</span>
      </div>
      <div className="h-[29px] flex items-center text-[12px] text-black whitespace-nowrap pl-[7px] pt-px">
        {menuItems.map(([t, w]) => <span key={t} className={`${w} shrink-0`}>{t}</span>)}
        <IcNewDoc />
        <Tx t="新建变更" className="ml-[4px]" />
        <Caret className="ml-[6px]" />
        <div className="ml-[7px]"><IcBot /></div>
        <Tx t="广小二" className="ml-[4px]" />
        <Tx t="常用工具" className="ml-[53px]" />
        <div className="ml-[98px]"><IcUser /></div>
        <span className="ml-[5px] w-[76px] shrink-0 font-['Noto_Sans',sans-serif] tracking-[0.1px]">13907298339</span>
        <Caret className="ml-[6px]" />
        <Tx t="造价豆:0" className="ml-[9px]" />
        <div className="ml-[9px]"><IcBell /></div>
        <More className="ml-[39px] -translate-y-[4px]" />
      </div>
      <Toolbar1 />
      <div className="h-[626px] flex overflow-hidden">
        <LeftPanel />
        <div className="flex-1 flex flex-col">
          <Toolbar2 />
          <div className="flex h-[598px]">
            <ListPanel />
            <PropPanel />
          </div>
        </div>
      </div>
      <div className="h-[20px] flex items-center bg-[#f0f0f0]">
        <div className={`${cells} w-[149px]`} />
        <div className={`${cells} w-[78px] ml-px pl-[2px]`}><Mixed t="层高:3.55m" /></div>
        <div className={`${cells} w-[99px] ml-[2px] pl-[2px]`}><Mixed t="底标高:-3.58m" /></div>
        <div className={`${cells} w-[48px] ml-[2px] pl-[2px]`}><Mixed t="0" /></div>
        <div className={`${cells} w-[916px] ml-[2px] pl-[1px]`}>名称在当前层当前构件类型下不允许重名</div>
        <div className={`${cells} w-[69px] ml-px pl-[2px]`}><Mixed t="732.6 FPS" /></div>
      </div>
      <Taskbar />

      <Dialog />

      <div className="absolute left-[1245px] top-[5px] flex items-center">
        <Sv w={11} h={11}><path d="M0 5.500h10" stroke="#8a8a8a" /></Sv>
        <Sv w={11} h={11} className="ml-[34px]"><path d="M2.500.5h8v8h-2M.5 2.500h8v8h-8z" fill="none" stroke="#8a8a8a" /></Sv>
        <Sv w={11} h={11} className="ml-[35px]"><path d="M.5.5l10 10M10.500.5l-10 10" stroke="#8a8a8a" /></Sv>
      </div>

      <div className="absolute left-[1106px] top-[-30px] w-[48px] h-[49px] rounded-full bg-[#2fa84f] border-[2px] border-[#d5e8d5] shadow-[0_1px_3px_rgba(0,0,0,0.45)] flex items-end justify-center pb-[5px] text-white text-[12px] font-bold font-['Liberation_Sans',sans-serif]">71</div>

      <div className="absolute left-[938px] top-[19px] w-[175px] h-[24px] bg-white border border-[#cbd8e6] flex items-center text-[#1565c0] pl-[23px]">
        <span className="text-[14px] font-bold shrink-0">英</span>
        <Sv w={8} h={11} className="ml-[14px]"><path d="M1.500 1a1 1 0 110 .1M5 2c2 3 1 7-3 8" fill="none" stroke="#1565c0" strokeWidth="1.800" /></Sv>
        <Sv w={12} h={17} className="ml-[9px]"><rect x="3.500" y="0" width="5" height="11" rx="2.500" fill="#1f7fd6" /><path d="M1 7c0 6 10 6 10 0M6 13v4" fill="none" stroke="#1f7fd6" strokeWidth="1.400" /></Sv>
        <Sv w={16} h={14} className="ml-[9px]"><rect x="0.500" y="0.500" width="15" height="13" rx="2" fill="#1f7fd6" /><path d="M3 4h10M3 7h10M5 10h6" stroke="#fff" strokeDasharray="1.500 1" /></Sv>
        <Sv w={15} h={16} className="ml-[7px]"><circle cx="5" cy="4" r="3" fill="#b8c4d0" /><path d="M0 14c0-6 9-6 9 0z" fill="#b8c4d0" /><rect x="7" y="8" width="8" height="8" fill="#dde3ea" /></Sv>
        <Sv w={14} h={14} className="ml-[7px]"><path d="M4 0L0 3l2 3 2-1v9h6V5l2 1 2-3-4-3-3 2z" fill="#1f7fd6" /></Sv>
        <Sv w={15} h={15} className="ml-[7px]"><path d="M14 3l-3 3-2-2 3-3C9 0 6 2 7 6L1 12c-1 2 1 3 2 2l6-6c4 1 6-2 5-5z" fill="#1f7fd6" /></Sv>
      </div>
      <div className="absolute left-[928px] top-[18px] w-[27px] h-[27px] rounded-[5px] -rotate-[5deg] bg-[#e8491d] flex items-center justify-center text-white font-['Liberation_Sans',sans-serif] font-bold italic text-[26px] leading-none">S</div>
    </div>
  );
}
